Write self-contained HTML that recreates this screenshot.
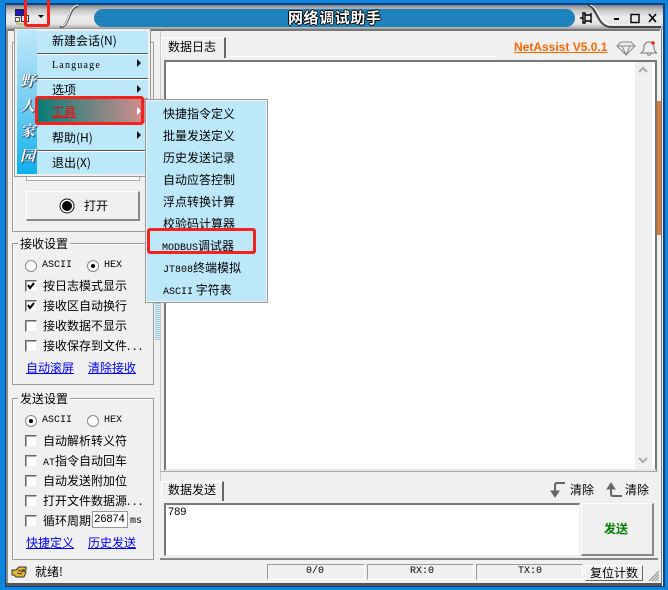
<!DOCTYPE html>
<html><head><meta charset="utf-8"><style>
html,body{margin:0;padding:0;width:668px;height:590px;overflow:hidden;background:#0f86dc}
*{box-sizing:border-box}
div,span,a,svg{position:absolute}
.t{white-space:nowrap;font:12px/14px "WenQuanYi Zen Hei","Noto Sans CJK SC",sans-serif;color:#000}
.m{font-family:"Liberation Mono","WenQuanYi Zen Hei",monospace;font-size:10px}
.l{color:#00f;text-decoration:underline}
.d{position:static;letter-spacing:2.6px}
.cb{width:12px;height:12px;background:#fff;border:1px solid;border-color:#666 #eee #eee #666;box-shadow:inset 1px 1px 0 #aaa}
.rd{width:12px;height:12px;border-radius:50%;background:#fff;border:1px solid #888}
.rd i{position:absolute;left:3px;top:3px;width:4px;height:4px;border-radius:50%;background:#000}
.g{border:1px solid #9a9a9a;box-shadow:inset 1px 1px 0 #fff}
.lg{background:#f0f0f0;padding:0 2px}
.sep{left:37px;height:2px;background:linear-gradient(#555 50%,#fff 50%)}
.red{border:3px solid #f4211c;border-radius:3px}
.arr{width:0;height:0;border-left:4px solid #111;border-top:4px solid transparent;border-bottom:4px solid transparent}
.cell{top:564px;height:16px;border:1px solid;border-color:#999 #fff #fff #999}
.s{position:static;font:10px "Liberation Mono",monospace}
</style></head><body>
<div style="left:5px;top:3px;width:660px;height:584px;background:#0a3f8c"></div>
<div style="left:6px;top:5px;width:657px;height:581px;background:#f0f0f0"></div>
<!-- title bar -->
<div style="left:6px;top:5px;width:657px;height:24px;background:linear-gradient(#808080 0,#c4c4c4 5px,#ececec 12px,#e4e4e4 19px,#a0a0a0 24px)"></div>
<div style="left:94px;top:9px;width:481px;height:18px;border-radius:9px;background:repeating-linear-gradient(#2188c3 0,#2188c3 1px,#1a7db4 1px,#1a7db4 2px)"></div>
<svg style="left:50px;top:4px" width="44" height="25"><path d="M10 23C20 23 18 3 28 2" fill="none" stroke="#555" stroke-width="2.4"/><path d="M11 22C20 22 17 3 28 1" fill="none" stroke="#fff" stroke-width="1"/></svg>
<svg style="left:585px;top:5px" width="78" height="25"><path d="M3 0C12 2 12 21 25 22H76" fill="none" stroke="#444" stroke-width="2"/><path d="M5 0C14 2 14 19 26 20H76" fill="none" stroke="#fff" stroke-width="1"/></svg>
<div class="t" style="left:288px;top:9px;font-size:15px;line-height:17px;font-weight:bold;color:#fff;letter-spacing:.6px;text-shadow:1px 0 #000,-1px 0 #000,0 1px #000,0 -1px #000">网络调试助手</div>
<svg style="left:14px;top:9px" width="18" height="17"><rect x="1.5" y="0.5" width="8" height="6" fill="#1a1ac0" stroke="#223"/><rect x="7.5" y="6.5" width="7" height="6" fill="#eee" stroke="#333"/><rect x="1.5" y="8.5" width="4" height="4" fill="#eee" stroke="#555"/><path d="M3 13V15H12V13" fill="none" stroke="#b5b530" stroke-width="1.2"/></svg>
<div style="left:38px;top:15px;width:0;height:0;border-left:3px solid transparent;border-right:3px solid transparent;border-top:3px solid #000"></div>
<!-- window btns -->
<svg style="left:578px;top:10px" width="84" height="16"><path d="M2 8H5M5 3H7V13H5ZM7 5H13V11H7M13 3V13" fill="none" stroke="#000" stroke-width="1.4"/><rect x="36" y="8" width="5" height="2" fill="#000"/><rect x="53" y="4.5" width="8" height="8" fill="none" stroke="#000" stroke-width="1.4"/><path d="M71 4L78 12M78 4L71 12" stroke="#000" stroke-width="1.6"/></svg>
<!-- body frame -->
<div style="left:6px;top:29px;width:654px;height:2px;background:#777"></div>
<div style="left:6px;top:29px;width:2px;height:554px;background:#8a8a8a"></div>
<div style="left:661px;top:29px;width:1px;height:556px;background:#777"></div>
<div style="left:6px;top:583px;width:656px;height:3px;background:#555"></div>
<!-- left groups -->
<div class="g" style="left:12px;top:42px;width:142px;height:190px"></div>
<div style="left:26px;top:170px;width:114px;height:11px;background:#fff;border:1px solid #aaa"></div>
<div style="left:26px;top:191px;width:114px;height:30px;background:#f0f0f0;border:1px solid;border-color:#fff #888 #888 #fff;border-width:1px 2px 2px 1px"></div>
<svg style="left:58px;top:197px" width="18" height="18"><circle cx="9" cy="9" r="7" fill="#fff" stroke="#111"/><circle cx="9" cy="9" r="5" fill="#000"/></svg>
<div class="t" style="left:84px;top:199px">打开</div>

<div class="g" style="left:12px;top:243px;width:142px;height:142px"></div>
<div class="t lg" style="left:18px;top:237px">接收设置</div>
<div class="rd" style="left:25px;top:260px"></div><div class="t m" style="left:42px;top:259px">ASCII</div>
<div class="rd" style="left:87px;top:260px"><i></i></div><div class="t m" style="left:104px;top:259px">HEX</div>
<div class="cb" style="left:25px;top:280px"></div><div class="t" style="left:43px;top:279px">按日志模式显示</div>
<div class="cb" style="left:25px;top:300px"></div><div class="t" style="left:43px;top:299px">接收区自动换行</div>
<div class="cb" style="left:25px;top:320px"></div><div class="t" style="left:43px;top:319px">接收数据不显示</div>
<div class="cb" style="left:25px;top:340px"></div><div class="t" style="left:43px;top:339px">接收保存到文件<span class="d">...</span></div>
<svg style="left:25px;top:280px" width="12" height="32"><path d="M3 5L5 8L9 3M3 25L5 28L9 23" fill="none" stroke="#000" stroke-width="2"/></svg>
<div class="t l" style="left:26px;top:361px">自动滚屏</div><div class="t l" style="left:88px;top:361px">清除接收</div>

<div class="g" style="left:12px;top:398px;width:142px;height:162px"></div>
<div class="t lg" style="left:18px;top:392px">发送设置</div>
<div class="rd" style="left:25px;top:415px"><i></i></div><div class="t m" style="left:42px;top:414px">ASCII</div>
<div class="rd" style="left:87px;top:415px"></div><div class="t m" style="left:104px;top:414px">HEX</div>
<div class="cb" style="left:25px;top:435px"></div><div class="t" style="left:43px;top:434px">自动解析转义符</div>
<div class="cb" style="left:25px;top:455px"></div><div class="t" style="left:43px;top:454px"><span class="s" style="letter-spacing:0">AT</span>指令自动回车</div>
<div class="cb" style="left:25px;top:475px"></div><div class="t" style="left:43px;top:474px">自动发送附加位</div>
<div class="cb" style="left:25px;top:495px"></div><div class="t" style="left:43px;top:494px">打开文件数据源<span class="d">...</span></div>
<div class="cb" style="left:25px;top:515px"></div><div class="t" style="left:43px;top:514px">循环周期</div>
<div style="left:92px;top:511px;width:36px;height:17px;background:#fff;border:1px solid #999"></div>
<div class="t m" style="left:94px;top:513px;font-size:11px;letter-spacing:-.5px">26874</div>
<div class="t m" style="left:130px;top:515px;font-size:10px">ms</div>
<div class="t l" style="left:26px;top:536px">快捷定义</div><div class="t l" style="left:88px;top:536px">历史发送</div>

<!-- splitter -->
<div style="left:155px;top:303px;width:5px;height:37px;background:repeating-linear-gradient(#9fc7dc 0,#9fc7dc 1px,#e0eef5 1px,#e0eef5 2px)"></div>
<div style="left:160px;top:31px;width:1px;height:450px;background:#ccc"></div>

<!-- log area -->
<div style="left:161px;top:37px;width:65px;height:21px;background:#f0f0f0;border:1px solid;border-color:#fff #666 #f0f0f0 #fff;border-width:1px 2px 0 1px"></div>
<div class="t" style="left:168px;top:40px">数据日志</div>
<div style="left:226px;top:56px;width:270px;height:1px;background:#fff"></div>
<div style="left:164px;top:60px;width:493px;height:411px;background:#fff;border:1px solid;border-width:2px 2px 2px 2px;border-color:#777 #777 #e5e5e5 #777"></div>
<div style="left:635px;top:62px;width:17px;height:407px;background:#f0f0f0"></div>
<svg style="left:634px;top:64px" width="20" height="12"><path d="M5 8L9 4L13 8" fill="none" stroke="#aaa" stroke-width="2"/></svg>
<svg style="left:634px;top:454px" width="20" height="12"><path d="M5 4L9 8L13 4" fill="none" stroke="#aaa" stroke-width="2"/></svg>
<div style="left:657px;top:101px;width:4px;height:134px;background:#dd7a35"></div>
<a class="t" style="left:514px;top:40px;color:#ff6600;font-weight:bold;font-family:'Liberation Sans',sans-serif;font-size:12px;text-decoration:underline">NetAssist V5.0.1</a>
<svg style="left:616px;top:40px" width="20" height="16"><path d="M1 6L5 2H15L19 6L10 15ZM1 6H19M6 6L10 15L14 6" fill="#eee" stroke="#888"/></svg>
<svg style="left:640px;top:40px" width="20" height="16"><path d="M1 13C4 11 4 9 4 7C4 4 6 2 9 2C13 2 14 5 14 7C14 10 15 12 17 13ZM7 13C7 16 11 16 11 13" fill="none" stroke="#777"/><circle cx="13" cy="3" r="1.7" fill="#f22"/></svg>

<!-- send area -->
<div style="left:160px;top:471px;width:498px;height:1px;background:#aaa"></div>
<div style="left:161px;top:481px;width:63px;height:20px;background:#f0f0f0;border:1px solid;border-color:#fff #666 #f0f0f0 #fff;border-width:1px 2px 0 1px"></div>
<div class="t" style="left:168px;top:483px">数据发送</div>
<svg style="left:549px;top:481px" width="18" height="18"><path d="M16 2H8Q6 2 6 4V11" fill="none" stroke="#666" stroke-width="2"/><path d="M2 10L6 16L10 10Z" fill="#666" stroke="#666"/></svg>
<div class="t" style="left:570px;top:483px">清除</div>
<svg style="left:604px;top:481px" width="18" height="18"><path d="M18 15H9Q7 15 7 13V7" fill="none" stroke="#666" stroke-width="2"/><path d="M3 8L7 2L11 8Z" fill="#666" stroke="#666"/></svg>
<div class="t" style="left:625px;top:483px">清除</div>
<div style="left:164px;top:503px;width:416px;height:53px;background:#fff;border:1px solid;border-width:2px 1px 1px 2px;border-color:#777 #eee #eee #777"></div>
<div class="t" style="left:168px;top:505px;font-size:11px;font-family:'Liberation Sans',sans-serif">789</div>
<div style="left:581px;top:503px;width:73px;height:53px;background:#f0f0f0;border:1px solid;border-width:1px 2px 2px 1px;border-color:#fff #888 #888 #fff"></div>
<div class="t" style="left:604px;top:522px;color:#008000;font-weight:bold">发送</div>
<div style="left:160px;top:558px;width:498px;height:2px;background:#888"></div>

<!-- status -->
<svg style="left:11px;top:565px" width="18" height="14"><path d="M1 5H5L8 2H15V5H11L15 7L13 12H5L3 10H1Z" fill="#e8b830" stroke="#333"/><path d="M7 5L12 7M6 8L11 9" stroke="#333"/></svg>
<div class="t" style="left:35px;top:565px">就绪!</div>
<div class="cell" style="left:267px;width:98px"></div><div class="t m" style="left:306px;top:565px">0/0</div>
<div class="cell" style="left:367px;width:107px"></div><div class="t m" style="left:410px;top:565px">RX:0</div>
<div class="cell" style="left:476px;width:107px"></div><div class="t m" style="left:518px;top:565px">TX:0</div>
<div style="left:585px;top:565px;width:58px;height:16px;border:1px solid;border-color:#fff #666 #666 #fff;background:#f0f0f0"></div>
<div class="t" style="left:590px;top:566px">复位计数</div>
<svg style="left:648px;top:570px" width="12" height="12"><path d="M11 1L1 11M11 4L4 11M11 7L7 11M11 10L10 11" stroke="#888"/></svg>

<!-- menu -->
<div style="left:14px;top:28px;width:137px;height:149px;background:#bde8fa;border:1px solid #999;box-shadow:inset 0 0 0 2px #f0f0f0"></div>
<div style="left:17px;top:30px;width:20px;height:144px;background:linear-gradient(#bde8fa 0,#7fd0f2 45%,#0db0ee 100%)"></div>
<div class="t" style="left:20px;top:70px;width:16px;font:italic bold 15px/25px 'Liberation Serif','Noto Serif CJK SC',serif;color:#fff;text-shadow:1px 1px 1px #246,0 0 1px #246;white-space:normal">野人家园</div>
<div class="t" style="left:52px;top:34px">新建会话(N)</div>
<div class="sep" style="top:53px;width:111px"></div>
<div class="t" style="left:52px;top:59px;font-size:10px;font-family:'Liberation Serif',serif;letter-spacing:1.2px">Language</div><div class="arr" style="left:137px;top:59px"></div>
<div class="sep" style="top:78px;width:111px"></div>
<div class="t" style="left:52px;top:83px">选项</div><div class="arr" style="left:137px;top:85px"></div>
<div style="left:37px;top:98px;width:111px;height:25px;background:linear-gradient(90deg,#087c76,#dc8e8e)"></div>
<div class="t" style="left:52px;top:105px;color:#f00;text-decoration:underline">工具</div><div class="arr" style="left:137px;top:107px;border-left-color:#fff"></div>
<div class="t" style="left:52px;top:131px">帮助(H)</div><div class="arr" style="left:137px;top:131px"></div>
<div class="sep" style="top:150px;width:111px"></div>
<div class="t" style="left:52px;top:156px">退出(X)</div>

<!-- submenu -->
<div style="left:145px;top:99px;width:123px;height:204px;background:#bde8fa;border:1px solid #999;box-shadow:inset 0 0 0 1px #f0f0f0"></div>
<div class="t" style="left:163px;top:107px">快捷指令定义</div>
<div class="t" style="left:163px;top:129px">批量发送定义</div>
<div class="t" style="left:163px;top:151px">历史发送记录</div>
<div class="t" style="left:163px;top:173px">自动应答控制</div>
<div class="t" style="left:163px;top:195px">浮点转换计算</div>
<div class="t" style="left:163px;top:217px">校验码计算器</div>
<div class="t" style="left:162px;top:239px"><span class="s">MODBUS</span>调试器</div>
<div class="t" style="left:163px;top:261px"><span class="s">JT808</span>终端模拟</div>
<div class="t" style="left:163px;top:283px"><span class="s">ASCII</span> 字符表</div>

<!-- red annotations -->
<div class="red" style="left:24px;top:-3px;width:26px;height:30px"></div>
<div class="red" style="left:35px;top:96px;width:109px;height:29px"></div>
<div class="red" style="left:147px;top:228px;width:109px;height:26px"></div>
</body></html>
